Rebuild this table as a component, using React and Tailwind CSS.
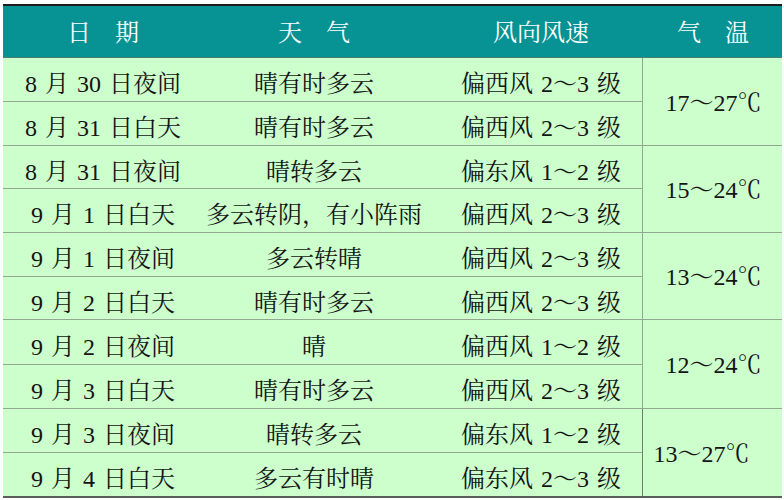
const FONT = "font-['Liberation_Serif','Noto_Serif_CJK_SC','Noto_Sans_CJK_SC',serif]"

const ROWS = [
  { date: '8 月 30 日夜间', weather: '晴有时多云', wind: '偏西风 2～3 级' },
  { date: '8 月 31 日白天', weather: '晴有时多云', wind: '偏西风 2～3 级' },
  { date: '8 月 31 日夜间', weather: '晴转多云', wind: '偏东风 1～2 级' },
  { date: '9 月 1 日白天', weather: '多云转阴，有小阵雨', wind: '偏西风 2～3 级' },
  { date: '9 月 1 日夜间', weather: '多云转晴', wind: '偏西风 2～3 级' },
  { date: '9 月 2 日白天', weather: '晴有时多云', wind: '偏西风 2～3 级' },
  { date: '9 月 2 日夜间', weather: '晴', wind: '偏西风 1～2 级' },
  { date: '9 月 3 日白天', weather: '晴有时多云', wind: '偏西风 2～3 级' },
  { date: '9 月 3 日夜间', weather: '晴转多云', wind: '偏东风 1～2 级' },
  { date: '9 月 4 日白天', weather: '多云有时晴', wind: '偏东风 2～3 级' },
]

const TEMPS = ['17～27℃', '15～24℃', '13～24℃', '12～24℃', '13～27℃']

const cell = 'flex items-center justify-center border-b border-[#8fa88f] pt-[9px] [word-spacing:2px]'

export default function App() {
  return (
    <div className={`${FONT} bg-white w-[784px] h-[500px] pt-[4px] pl-[3px]`}>
      <div className="w-[779px] border-t-2 border-[#1c1c1c]">
        {/* header */}
        <div className="grid grid-cols-[200px_222px_217px_140px] h-[52px] bg-[#079393] border-b border-[#4d7f74] text-white text-[24px]">
          <div className="flex items-center justify-center pt-[2px]">日　期</div>
          <div className="flex items-center justify-center pt-[2px]">天　气</div>
          <div className="flex items-center justify-center pt-[2px] pl-[15px]">风向风速</div>
          <div className="flex items-center justify-center pt-[2px] pl-[2px]">气　温</div>
        </div>

        {/* body */}
        <div className="grid grid-cols-[200px_222px_217px_140px] grid-rows-[44px_44px_43px_44px_44px_43px_45px_44px_44px_43px] bg-[#ccffcc] text-[#141414] text-[24px] leading-none border-b-2 border-[#5a5f5a]">
          {ROWS.map((r, i) => (
            <div key={i} className="contents">
              <div className={`${cell} col-start-1 ${i === 9 ? 'border-b-0' : ''}`} style={{ gridRow: i + 1 }}>
                {r.date}
              </div>
              <div className={`${cell} col-start-2 ${i === 9 ? 'border-b-0' : ''}`} style={{ gridRow: i + 1 }}>
                {r.weather}
              </div>
              <div className={`${cell} col-start-3 pl-[15px] ${i === 9 ? 'border-b-0' : ''}`} style={{ gridRow: i + 1 }}>
                {r.wind}
              </div>
            </div>
          ))}
          {TEMPS.map((t, i) => (
            <div
              key={t + i}
              className={`flex items-center justify-center col-start-4 row-span-2 border-l border-[#6f7f6f] pt-[2px] ${i === 4 ? 'pr-[22px]' : 'pl-[2px]'} ${i < 4 ? 'border-b border-[#8fa88f]' : ''}`}
              style={{ gridRow: `${i * 2 + 1} / span 2` }}
            >
              {t}
            </div>
          ))}
        </div>
      </div>
    </div>
  )
}
